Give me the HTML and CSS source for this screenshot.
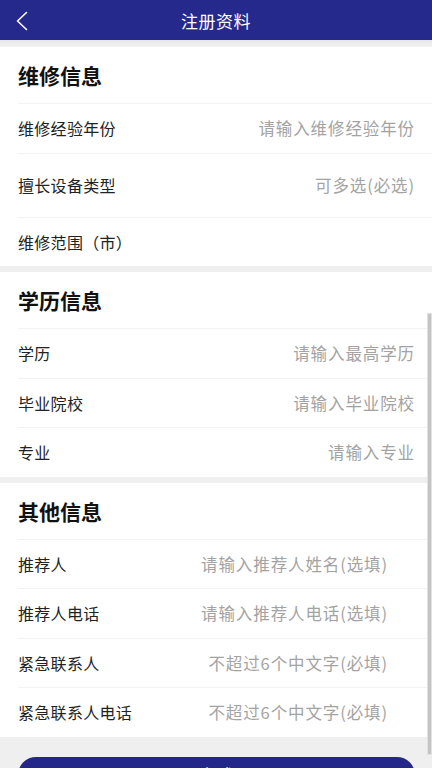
FILE: index.html
```html
<!DOCTYPE html>
<html lang="zh-CN">
<head>
<meta charset="utf-8">
<title>注册资料</title>
<link rel="stylesheet" href="styles.css">
</head>
<body>
<header class="topbar">
  <span class="back"><svg width="14" height="20" viewBox="0 0 14 20"><path d="M11.5 1.5 L2.5 10 L11.5 18.5" fill="none" stroke="#fff" stroke-width="1.6" stroke-linecap="round" stroke-linejoin="round"/></svg></span>
  <h1 class="title">注册资料</h1>
</header>
<main class="page">
  <section class="card">
    <h2 class="card-title">维修信息</h2>
    <div class="row"><span class="label">维修经验年份</span><span class="ph">请输入维修经验年份</span></div>
    <div class="row tall"><span class="label">擅长设备类型</span><span class="ph">可多选(必选)</span></div>
    <div class="row"><span class="label">维修范围（市）</span></div>
  </section>
  <section class="card">
    <h2 class="card-title">学历信息</h2>
    <div class="row"><span class="label">学历</span><span class="ph">请输入最高学历</span></div>
    <div class="row"><span class="label">毕业院校</span><span class="ph">请输入毕业院校</span></div>
    <div class="row"><span class="label">专业</span><span class="ph">请输入专业</span></div>
  </section>
  <section class="card narrow">
    <h2 class="card-title">其他信息</h2>
    <div class="row"><span class="label">推荐人</span><span class="ph">请输入推荐人姓名(选填)</span></div>
    <div class="row"><span class="label">推荐人电话</span><span class="ph">请输入推荐人电话(选填)</span></div>
    <div class="row"><span class="label">紧急联系人</span><span class="ph">不超过6个中文字(必填)</span></div>
    <div class="row"><span class="label">紧急联系人电话</span><span class="ph">不超过6个中文字(必填)</span></div>
  </section>
  <div class="actions"><button class="done">完成</button></div>
</main>
<div class="scrollbar"></div>
</body>
</html>
```
FILE: styles.css
```css
* { box-sizing: border-box; }
html, body { margin: 0; padding: 0; }
body {
  background: #efefef;
  font-family: "Noto Sans CJK SC", "Noto Sans", sans-serif;
  color: #1f1f1f;
  width: 432px;
  height: 768px;
  overflow: hidden;
  position: relative;
}
.topbar {
  height: 40px;
  background: #26298c;
  display: flex;
  align-items: center;
  justify-content: center;
  position: relative;
}
.back {
  position: absolute;
  left: 15px;
  top: 11px;
  display: flex;
}
.title {
  margin: 0;
  color: #fff;
  font-size: 17px;
  font-weight: 400;
  letter-spacing: 0.5px;
}
.page {
  padding-top: 7px;
  display: flex;
  flex-direction: column;
  gap: 6px;
  background: linear-gradient(#e6e6e6, #f2f2f2 7px, #efefef 8px);
}
.card {
  background: #fff;
  padding-left: 18px;
}
.card-title {
  margin: 0;
  height: 56px;
  display: flex;
  align-items: center;
  font-size: 21px;
  font-weight: 700;
  color: #111;
}
.row {
  height: 49.5px;
  border-top: 1px solid #f3f3f3;
  display: flex;
  align-items: center;
  justify-content: space-between;
  padding-right: 17px;
}
.row.tall { height: 64px; }
.card.narrow .row { padding-right: 44px; }
.label {
  font-size: 16px;
  color: #222;
  letter-spacing: 0.3px;
}
.ph {
  font-size: 16.5px;
  color: #a3a3a3;
  letter-spacing: 0.9px;
}
.actions {
  padding: 14px 17px 0 18px;
}
.done {
  width: 100%;
  height: 36px;
  border: none;
  border-radius: 18px;
  background: #24278a;
  color: #fff;
  font-family: inherit;
  font-size: 18px;
  line-height: 36px;
  padding: 0;
}
.scrollbar {
  position: absolute;
  left: 427px;
  top: 313px;
  width: 5px;
  height: 442px;
  background: #c4c4c4;
  border: 1px solid #e2e2e2;
}
```
